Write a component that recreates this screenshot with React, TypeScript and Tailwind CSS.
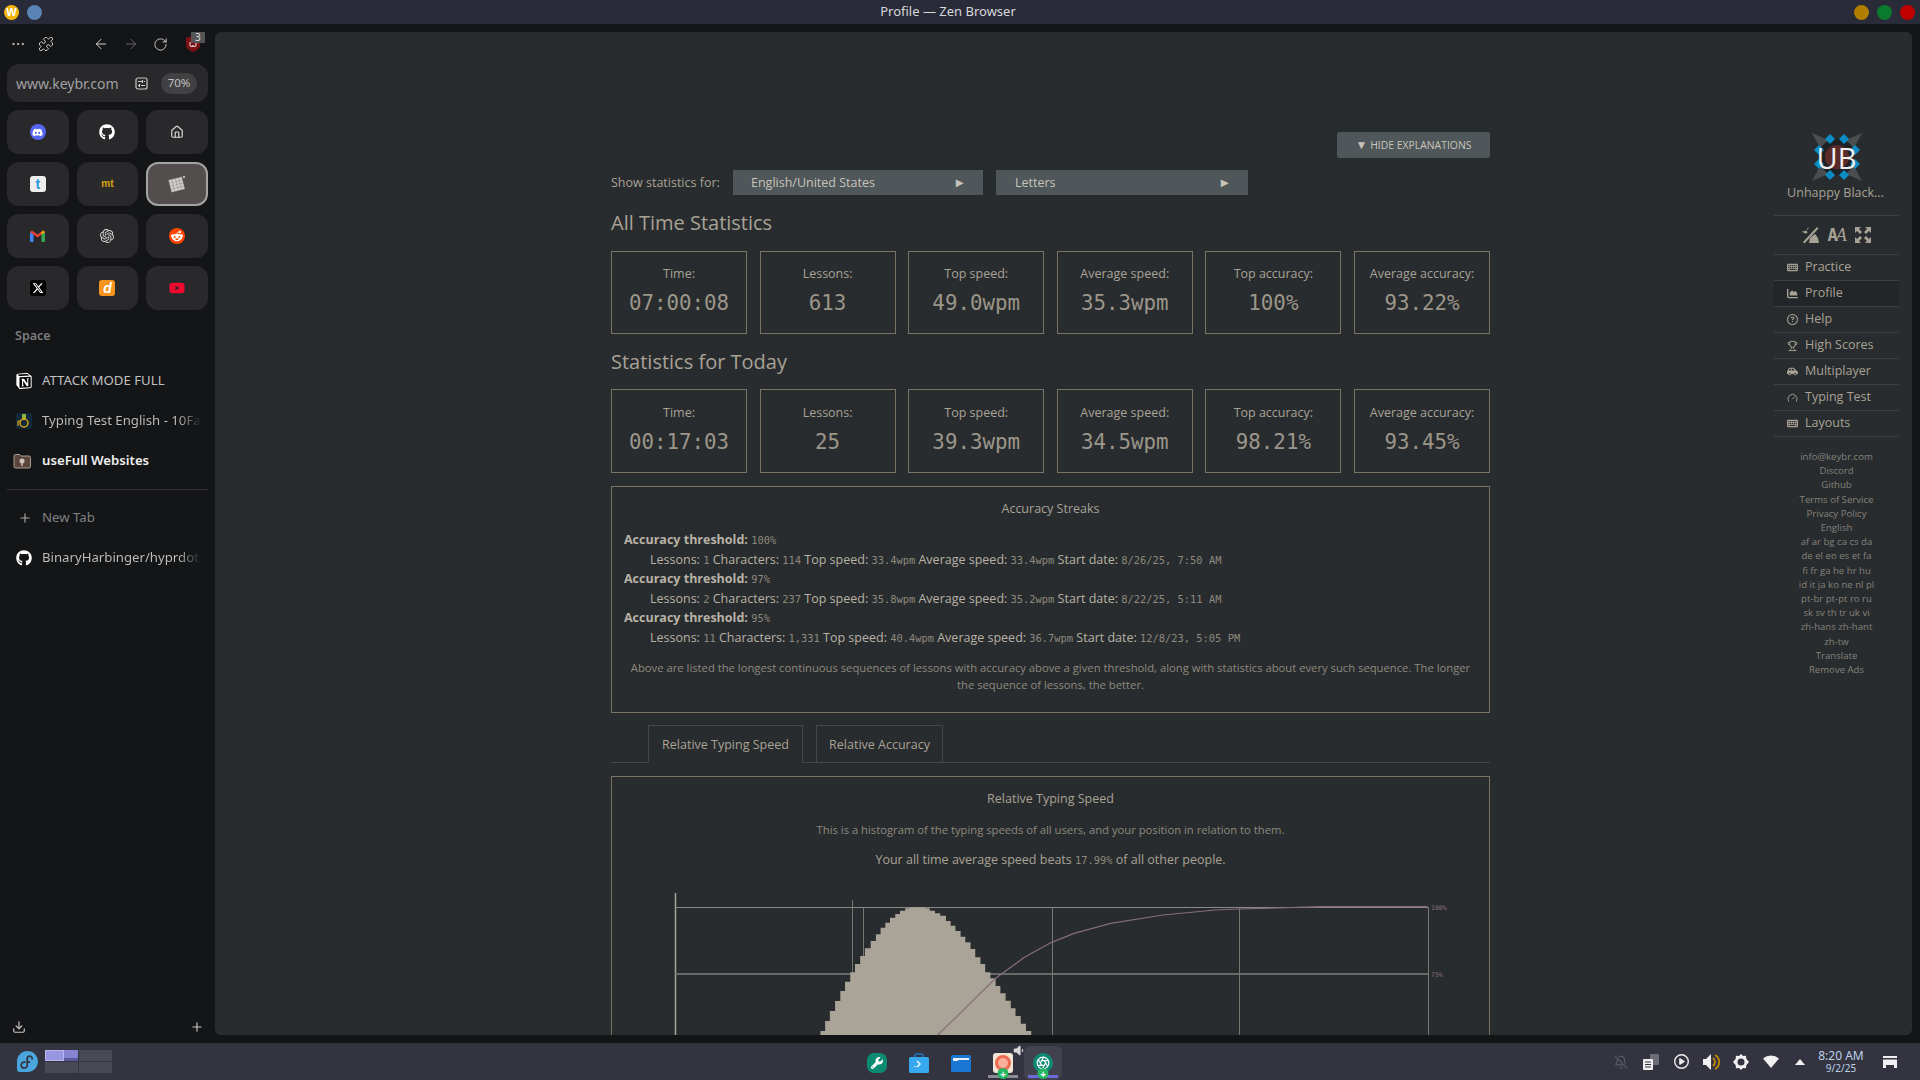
import React from 'react'
import {
  ArrowLeft,
  ArrowRight,
  Aperture,
  BellOff,
  Download,
  Ellipsis,
  Gauge,
  Home,
  Plus,
  Puzzle,
  RotateCw,
  Trophy,
} from 'lucide-react'
import {
  FaCarSide,
  FaChartArea,
  FaDiscord,
  FaGithub,
  FaRedditAlien,
  FaRegCircleQuestion,
  FaRegCirclePlay,
  FaVolumeLow,
  FaWrench,
  FaXTwitter,
  FaYoutube,
  FaKeyboard,
} from 'react-icons/fa6'
import { SiFedora, SiNotion, SiOpenai } from 'react-icons/si'

const allTime = [
  ['Time:', '07:00:08'],
  ['Lessons:', '613'],
  ['Top speed:', '49.0wpm'],
  ['Average speed:', '35.3wpm'],
  ['Top accuracy:', '100%'],
  ['Average accuracy:', '93.22%'],
]

const today = [
  ['Time:', '00:17:03'],
  ['Lessons:', '25'],
  ['Top speed:', '39.3wpm'],
  ['Average speed:', '34.5wpm'],
  ['Top accuracy:', '98.21%'],
  ['Average accuracy:', '93.45%'],
]

const streaks = [
  ['100%', '1', '114', '33.4wpm', '33.4wpm', '8/26/25, 7:50 AM'],
  ['97%', '2', '237', '35.8wpm', '35.2wpm', '8/22/25, 5:11 AM'],
  ['95%', '11', '1,331', '40.4wpm', '36.7wpm', '12/8/23, 5:05 PM'],
]

const footerLinks = [
  'info@keybr.com',
  'Discord',
  'Github',
  'Terms of Service',
  'Privacy Policy',
  'English',
  'af ar bg ca cs da',
  'de el eo es et fa',
  'fi fr ga he hr hu',
  'id it ja ko ne nl pl',
  'pt-br pt-pt ro ru',
  'sk sv th tr uk vi',
  'zh-hans zh-hant',
  'zh-tw',
  'Translate',
  'Remove Ads',
]

// histogram steps read off the reference, x/y in the zoomed crop
const histogram = [
  [345, 453], [354, 423], [363, 393], [373, 363], [383, 333], [392, 305], [402, 277], [411, 252],
  [421, 228], [430, 205], [441, 183], [451, 163], [460, 143], [469, 128], [478, 113], [488, 102],
  [497, 92], [507, 85], [516, 82], [545, 85], [554, 92], [564, 100], [574, 107], [585, 123],
  [594, 137], [603, 153], [613, 170], [622, 187], [632, 207], [641, 232], [651, 252], [660, 277],
  [670, 295], [680, 318], [689, 340], [699, 362], [709, 385], [718, 408], [728, 431], [738, 453],
]

const curve = [
  [568, 467], [625, 380], [680, 295], [735, 232], [787, 187], [830, 160], [900, 130], [1000, 105],
  [1100, 90], [1146, 87], [1218, 84], [1300, 80], [1506, 80],
]

const toX = (x: number) => 640 + x / 1.912
const toY = (y: number) => 880 + y / 3

function histogramPath() {
  let d = `M${toX(345)} 1040`
  histogram.forEach(([x, y]) => {
    d += `H${toX(x)}V${toY(y)}`
  })
  return `${d}H${toX(748)}V1040Z`
}

function StatRow({ items, tall }: { items: string[][]; tall?: boolean }) {
  return (
    <div className="flex justify-between">
      {items.map(([label, value]) => (
        <div
          key={label}
          className={
            tall
              ? 'flex h-[84px] w-[136px] flex-col items-center border border-[#7a7263] pt-[14px]'
              : 'flex h-[83px] w-[136px] flex-col items-center border border-[#7a7263] pt-[13px]'
          }
        >
          <div className="text-[12.5px] leading-[18px] text-[#a8a296]">{label}</div>
          <div className="mt-[6px] font-['DejaVu_Sans_Mono',monospace] text-[20.8px] leading-[28px] text-[#9c968a]">
            {value}
          </div>
        </div>
      ))}
    </div>
  )
}

function Mono({ children }: { children: React.ReactNode }) {
  return (
    <span className="font-['DejaVu_Sans_Mono',monospace] text-[10.4px] leading-none font-normal text-[#8e897e]">
      {children}
    </span>
  )
}

function Tile({ children, active }: { children: React.ReactNode; active?: boolean }) {
  return (
    <div
      className={
        active
          ? 'flex h-11 items-center justify-center rounded-xl border-2 border-[#a5a3a0] bg-[#514e4d]'
          : 'flex h-11 items-center justify-center rounded-xl bg-[#29292b]'
      }
    >
      {children}
    </div>
  )
}

function KeybrLogo() {
  return (
    <svg width="18" height="18" viewBox="0 0 18 18">
      <g transform="rotate(-14 9 9)">
        <rect x="1.500" y="3" width="14" height="13" fill="#8f8c89" />
        {[0, 1, 2, 3].map((row) =>
          [0, 1, 2, 3].map((col) => (
            <rect key={`${row}-${col}`} x={2 + col * 3.4} y={3.500 + row * 3.100} width="3" height="2.700" fill="#cfccc8" />
          )),
        )}
      </g>
      <circle cx="16" cy="2" r="1" fill="#dddddd" />
    </svg>
  )
}

function GmailIcon() {
  return (
    <svg width="15" height="12" viewBox="0 0 15 12">
      <path d="M0 2v9a1 1 0 0 0 1 1h2.5V4.5z" fill="#4285f4" />
      <path d="M15 2v9a1 1 0 0 1-1 1h-2.5V4.5z" fill="#34a853" />
      <path d="M0 2 7.5 7.5 15 2 13 .5 7.5 4.5 2 .5z" fill="#ea4335" />
      <path d="M11.5 2.5 13 .5 15 2l-3.500 2.500z" fill="#fbbc04" />
    </svg>
  )
}

function SideTab({
  icon,
  label,
  bold,
  fade,
}: {
  icon: React.ReactNode
  label: string
  bold?: boolean
  fade?: boolean
}) {
  return (
    <div className="flex h-10 items-center pl-4">
      <div className="flex w-[26px] shrink-0 items-center">{icon}</div>
      <div
        className={
          bold
            ? 'overflow-hidden text-[13.2px] font-semibold whitespace-nowrap text-[#f0f0f0]'
            : fade
              ? 'w-[160px] overflow-hidden bg-gradient-to-r from-[#c0c0c0] from-85% to-transparent bg-clip-text text-[13.2px] whitespace-nowrap text-transparent'
              : 'overflow-hidden text-[13.2px] whitespace-nowrap text-[#c0c0c0]'
        }
      >
        {label}
      </div>
    </div>
  )
}

function Sidebar() {
  return (
    <aside className="flex w-[215px] shrink-0 flex-col pt-2 pb-[9px] text-[#c0c0c0]">
      <div className="relative flex h-6 items-center">
        <Ellipsis size={16} strokeWidth={1.5} className="ml-[10px] text-[#d0d0d0]" />
        <Puzzle size={16} strokeWidth={1.5} className="ml-[12px] text-[#c8c8c8]" />
        <ArrowLeft size={16} strokeWidth={1.5} className="ml-[39px] text-[#d0d0d0]" />
        <ArrowRight size={16} strokeWidth={1.5} className="ml-[14px] text-[#66666a]" />
        <RotateCw size={15} strokeWidth={1.5} className="ml-[14px] text-[#d0d0d0]" />
        <svg width="14" height="16" viewBox="0 0 14 16" className="ml-[18px]">
          <path d="M7 0 14 2v7c0 3-3 5.500-7 7-4-1.500-7-4-7-7V2z" fill="#7c1216" />
          <path d="M4 6v3a1.500 1.500 0 0 0 3 0 1.500 1.500 0 0 0 3 0V6" fill="none" stroke="#e8d8d8" strokeWidth="1.100" />
        </svg>
        <span className="absolute top-0 left-[191px] bg-[#555558] px-[4px] text-[10px] leading-[11px] text-[#dddddd]">
          3
        </span>
      </div>

      <div className="mx-[7px] mt-2 flex h-[38px] items-center rounded-xl bg-[#29292b] pl-[9px]">
        <span className="w-[119px] text-[14px] text-[#a0a0a2]">www.keybr.com</span>
        <svg width="13" height="13" viewBox="0 0 13 13" fill="none" stroke="#c8c8c8" strokeWidth="1.200">
          <rect x="1" y="1" width="11" height="11" rx="2" />
          <path d="M3 4.500h4M9 4.500h1M3 8.500h1M6 8.500h4M7.500 3v3M4.500 7v3" />
        </svg>
        <span className="ml-[13px] flex h-[21px] w-[36px] items-center justify-center rounded-full bg-[#414143] text-[11.5px] text-[#c0c0c0]">
          70%
        </span>
      </div>

      <div className="mx-[7px] mt-2 grid grid-cols-3 gap-2">
        <Tile>
          <span className="flex size-4 items-center justify-center rounded-full bg-[#5865f2]">
            <FaDiscord size={11} className="text-white" />
          </span>
        </Tile>
        <Tile>
          <FaGithub size={16} className="text-white" />
        </Tile>
        <Tile>
          <Home size={14} className="text-[#d8d8d8]" />
        </Tile>
        <Tile>
          <span className="flex size-4 items-center justify-center rounded-[3px] bg-[#eeeeee] font-['Liberation_Sans',sans-serif] text-[14px] leading-none font-bold text-[#2f9ae0]">
            t
          </span>
        </Tile>
        <Tile>
          <span className="flex size-4 items-center justify-center rounded-[3px] bg-[#2b2b2b] font-['Liberation_Sans',sans-serif] text-[10px] leading-none font-bold text-[#d9a514]">
            mt
          </span>
        </Tile>
        <Tile active>
          <KeybrLogo />
        </Tile>
        <Tile>
          <GmailIcon />
        </Tile>
        <Tile>
          <SiOpenai size={14} className="text-[#d8d8d8]" />
        </Tile>
        <Tile>
          <span className="flex size-4 items-center justify-center rounded-full bg-[#ff4500]">
            <FaRedditAlien size={12} className="text-white" />
          </span>
        </Tile>
        <Tile>
          <span className="flex size-4 items-center justify-center rounded-[3px] bg-black">
            <FaXTwitter size={12} className="text-white" />
          </span>
        </Tile>
        <Tile>
          <span className="flex size-4 items-center justify-center rounded-[3px] bg-[#f7941d] font-['Liberation_Sans',sans-serif] text-[14px] leading-none font-bold text-white italic">
            d
          </span>
        </Tile>
        <Tile>
          <FaYoutube size={16} className="text-[#f00a2e]" />
        </Tile>
      </div>

      <div className="mt-[18px] pl-[15px] text-[12.5px] leading-4 font-semibold text-[#7c7c7e]">Space</div>

      <div className="mt-[17px]">
        <SideTab
          icon={<SiNotion size={16} className="rounded-[3px] bg-black text-white" />}
          label="ATTACK MODE FULL"
        />
        <SideTab
          icon={
            <svg width="16" height="16" viewBox="0 0 16 16">
              <rect width="16" height="16" rx="3" fill="#11293a" />
              <path d="M6 1h4v6H6z" fill="#8fb23a" />
              <circle cx="8" cy="10" r="4" fill="none" stroke="#d9a514" strokeWidth="1.500" />
              <path d="M2 8h3M2 8v5" stroke="#d9a514" strokeWidth="1.200" />
            </svg>
          }
          label="Typing Test English - 10Fa"
          fade
        />
        <SideTab
          icon={
            <svg width="18" height="16" viewBox="0 0 18 16" className="-ml-[3px]">
              <path d="M1 3a1.500 1.500 0 0 1 1.500-1.500h4L8 3h8a1.500 1.500 0 0 1 1.500 1.500v9A1.500 1.500 0 0 1 16 15H2.500A1.500 1.500 0 0 1 1 13.500z" fill="#5b463c" stroke="#c9b9ae" strokeWidth=".8" />
              <circle cx="9" cy="8" r="2.500" fill="#cfc4bb" />
              <rect x="8.300" y="9" width="1.400" height="4" fill="#cfc4bb" />
            </svg>
          }
          label="useFull Websites"
          bold
        />
      </div>

      <div className="mx-[7px] mt-2 h-px bg-[#333335]" />

      <div className="mt-2">
        <div className="flex h-10 items-center pl-[18px] text-[13.2px] text-[#808082]">
          <Plus size={14} className="mr-[10px] text-[#a8a8a8]" />
          New Tab
        </div>
        <SideTab
          icon={<FaGithub size={16} className="text-white" />}
          label="BinaryHarbinger/hyprdots"
          fade
        />
      </div>

      <div className="mt-auto flex items-center justify-between pr-[11px] pl-[12px]">
        <Download size={14} className="text-[#c8c8c8]" />
        <Plus size={14} className="text-[#c8c8c8]" />
      </div>
    </aside>
  )
}

function Avatar() {
  return (
    <div className="relative flex h-[50px] w-[50px] items-center justify-center">
      <svg width="50" height="50" viewBox="0 0 50 50" className="absolute inset-0">
        <path d="M0 1 16 8 8 16zM50 1 42 16 34 8zM50 49 34 42 42 34zM0 49 8 34 16 42z" fill="#4a4e51" />
        <circle cx="25" cy="25" r="18" fill="#1e2224" />
        <circle cx="25" cy="25" r="12" fill="#5a2a26" />
        {[
          [18, 7],
          [32, 7],
          [43, 18],
          [43, 32],
          [32, 43],
          [18, 43],
          [7, 32],
          [7, 18],
        ].map(([x, y]) => (
          <path key={`${x}-${y}`} d={`M${x - 5} ${y}L${x} ${y - 5}L${x + 5} ${y}L${x} ${y + 5}Z`} fill="#0a8cc4" />
        ))}
      </svg>
      <span className="relative text-[29px] leading-none text-[#eeeeee]">UB</span>
    </div>
  )
}

function NavRow({ icon, label, active }: { icon: React.ReactNode; label: string; active?: boolean }) {
  return (
    <div
      className={
        active
          ? 'flex h-[26px] items-center gap-[7px] border-b border-[#3c4042] bg-[#232628] pl-[13px] text-[12.5px] text-[#a8a296]'
          : 'flex h-[26px] items-center gap-[7px] border-b border-[#3c4042] pl-[13px] text-[12.5px] text-[#a8a296]'
      }
    >
      <span className="flex w-[11px] justify-center">{icon}</span>
      {label}
    </div>
  )
}

function RightNav() {
  return (
    <nav className="ml-[284px] w-[125px] shrink-0 pt-[100px]">
      <div className="flex flex-col items-center">
        <Avatar />
        <div className="mt-[2px] pr-[2px] text-[12.5px] leading-[18px] text-[#a8a296]">Unhappy Black...</div>
      </div>
      <div className="mt-[13px] flex h-[40px] items-center justify-center gap-[7px] border-y border-[#3c4042] text-[#a8a296]">
        <svg width="19" height="19" viewBox="0 0 19 19" fill="#a8a296">
          <path d="M2 16 16 1l1.500 1.500L3.500 17.500z" />
          <path d="M8 1a4.500 4.500 0 0 0-1.500 6A4.500 4.500 0 0 1 1 5a5.500 5.500 0 0 0 7-4z" />
          <path d="M9 12l5-4 3 4 1 5H8z" />
        </svg>
        <span className="flex items-end leading-none">
          <span className="font-['DejaVu_Sans_Mono',monospace] text-[17px] font-bold">A</span>
          <span className="-ml-[2px] font-['Liberation_Serif',serif] text-[18px] italic">A</span>
        </span>
        <svg width="18" height="18" viewBox="0 0 18 18" fill="#a8a296">
          <path d="M1 1h6L5 3l3 3-2 2-3-3-2 2zM17 1v6l-2-2-3 3-2-2 3-3-2-2zM17 17h-6l2-2-3-3 2-2 3 3 2-2zM1 17v-6l2 2 3-3 2 2-3 3 2 2z" />
        </svg>
      </div>
      <NavRow icon={<FaKeyboard size={11} />} label="Practice" />
      <NavRow icon={<FaChartArea size={11} />} label="Profile" active />
      <NavRow icon={<FaRegCircleQuestion size={11} />} label="Help" />
      <NavRow icon={<Trophy size={12} />} label="High Scores" />
      <NavRow icon={<FaCarSide size={11} />} label="Multiplayer" />
      <NavRow icon={<Gauge size={12} />} label="Typing Test" />
      <NavRow icon={<FaKeyboard size={11} />} label="Layouts" />
      <div className="mt-[13px] flex flex-col items-center text-[9.6px] leading-[14.200px] text-[#85817a]">
        {footerLinks.map((link) => (
          <div key={link}>{link}</div>
        ))}
      </div>
    </nav>
  )
}

function Chart() {
  const line = curve.map(([x, y]) => `${toX(x)},${toY(y)}`).join(' ')
  return (
    <svg width="800" height="150" viewBox="660 890 800 150" className="mt-[21px] ml-[48px] block">
      <line x1="675.500" y1="893" x2="675.500" y2="1040" stroke="#aaa59a" strokeWidth="1.500" />
      <line x1="675" y1="907.500" x2="1428" y2="907.500" stroke="#8b8b85" />
      <line x1="675" y1="974" x2="1428" y2="974" stroke="#7f7f78" strokeWidth="1.400" />
      <line x1="852.500" y1="900" x2="852.500" y2="1040" stroke="#77776f" />
      <line x1="863.500" y1="907" x2="863.500" y2="1040" stroke="#77776f" />
      <line x1="1052.500" y1="907" x2="1052.500" y2="1040" stroke="#77776f" />
      <line x1="1239.500" y1="907" x2="1239.500" y2="1040" stroke="#77776f" />
      <line x1="1428.500" y1="907" x2="1428.500" y2="1040" stroke="#77776f" />
      <path d={histogramPath()} fill="#aaa397" />
      <polyline points={line} fill="none" stroke="#866d7b" strokeWidth="1.200" />
      <text x="1431" y="910" fontSize="6.500" fill="#866d7b" fontFamily="DejaVu Sans Mono, monospace">
        100%
      </text>
      <text x="1431" y="977" fontSize="6.500" fill="#866d7b" fontFamily="DejaVu Sans Mono, monospace">
        75%
      </text>
    </svg>
  )
}

function MainColumn() {
  return (
    <main className="ml-[396px] w-[879px] shrink-0 pt-[100px] font-['Open_Sans',sans-serif]">
      <div className="flex justify-end">
        <button className="h-[26px] w-[153px] rounded-[2px] bg-[#4f575b] text-[10.400px] text-[#c8c4ba]">
          <span className="text-[12px]">▼</span> HIDE EXPLANATIONS
        </button>
      </div>

      <div className="mt-[12px] flex h-[25px] items-center text-[12.5px] text-[#a8a296]">
        <span className="w-[122px] pt-px">Show statistics for:</span>
        <div className="flex h-full w-[250px] items-center justify-between bg-[#4f575b] pt-px pr-[17px] pl-[18px] text-[#c8c4ba]">
          English/United States <span className="text-[13px]">►</span>
        </div>
        <div className="ml-[13px] flex h-full w-[252px] items-center justify-between bg-[#4f575b] pt-px pr-[17px] pl-[19px] text-[#c8c4ba]">
          Letters <span className="text-[13px]">►</span>
        </div>
      </div>

      <h2 className="mt-[14px] text-[20px] leading-[28px] text-[#a8a296]">All Time Statistics</h2>
      <div className="mt-[14px]">
        <StatRow items={allTime} />
      </div>

      <h2 className="mt-[14px] text-[20px] leading-[28px] text-[#a8a296]">Statistics for Today</h2>
      <div className="mt-[13px]">
        <StatRow items={today} tall />
      </div>

      <section className="mt-[13px] h-[227px] border border-[#7a7263] px-[12px] pt-[13px] text-[12.5px] text-[#a8a296]">
        <div className="text-center leading-[18px]">Accuracy Streaks</div>
        <div className="mt-[12px] text-[#b8b2a6]">
          {streaks.map(([threshold, lessons, chars, top, avg, date]) => (
            <div key={threshold}>
              <div className="h-[19.500px] leading-[19.500px] font-bold">
                Accuracy threshold: <Mono>{threshold}</Mono>
              </div>
              <div className="h-[19.500px] pl-[26px] leading-[19.500px]">
                Lessons: <Mono>{lessons}</Mono> Characters: <Mono>{chars}</Mono> Top speed: <Mono>{top}</Mono> Average speed:{' '}
                <Mono>{avg}</Mono> Start date: <Mono>{date}</Mono>
              </div>
            </div>
          ))}
        </div>
        <p className="mt-[12px] text-center text-[11.250px] leading-[17px] text-[#8e897e]">
          Above are listed the longest continuous sequences of lessons with accuracy above a given threshold, along with
          statistics about every such sequence. The longer the sequence of lessons, the better.
        </p>
      </section>

      <div className="mt-[13px] flex h-[37px] items-end gap-[13px] border-b border-[#41474b] pl-[37px] text-[12.5px] text-[#a8a296]">
        <div className="-mb-px flex h-[38px] w-[155px] items-center justify-center border border-b-0 border-[#41474b] bg-[#282c2e] pt-[2px]">
          Relative Typing Speed
        </div>
        <div className="flex h-[37px] w-[127px] items-center justify-center border border-b-0 border-[#41474b] pt-[2px]">
          Relative Accuracy
        </div>
      </div>

      <section className="mt-[13px] h-[400px] border border-[#7a7263] pt-[13px] text-center text-[12.5px] text-[#a8a296]">
        <div className="leading-[18px]">Relative Typing Speed</div>
        <p className="mt-[13px] text-[11.250px] leading-[18px] text-[#8e897e]">
          This is a histogram of the typing speeds of all users, and your position in relation to them.
        </p>
        <p className="mt-[12px] leading-[18px]">
          Your all time average speed beats <Mono>17.99%</Mono> of all other people.
        </p>
        <Chart />
      </section>
    </main>
  )
}

function TaskbarIcon({ children, bar, active }: { children: React.ReactNode; bar?: string; active?: boolean }) {
  return (
    <div
      className={
        active
          ? 'relative flex h-[34px] w-[38px] items-center justify-center self-end rounded-md bg-[#41424e]'
          : 'relative flex h-[34px] w-[42px] items-center justify-center self-end'
      }
    >
      {children}
      {bar && (
        <>
          <span className={bar} />
          <span className="absolute bottom-[1px] left-1/2 flex size-[11px] -translate-x-1/2 items-center justify-center rounded-full bg-[#26b561] text-[10px] leading-none font-bold text-white">
            +
          </span>
        </>
      )}
    </div>
  )
}

function Taskbar() {
  return (
    <footer className="flex h-[37px] shrink-0 items-center bg-[#33343f] font-['Noto_Sans',sans-serif]">
      <div className="flex w-[856px] items-center">
        <span className="ml-[17px] flex size-[21px] items-center justify-center rounded-full bg-[#fff0]">
          <SiFedora size={21} className="text-[#4aa6df]" />
        </span>
        <div className="ml-[7px] grid grid-cols-2 gap-px">
          <div className="relative h-[11px] w-[33px] bg-[#5c5a9e]">
            <span className="absolute inset-y-0 left-0 w-[19px] border border-[#b8b5f0] bg-[#9a97e2]" />
            <span className="absolute top-0 right-0 h-[8px] w-[14px] bg-[#8683cf]" />
          </div>
          <div className="h-[11px] w-[33px] bg-[#484954]" />
          <div className="h-[11px] w-[33px] bg-[#484954]" />
          <div className="h-[11px] w-[33px] bg-[#484954]" />
        </div>
      </div>

      <div className="flex h-full w-[210px] items-center">
        <TaskbarIcon>
          <span className="flex size-[20px] items-center justify-center rounded-[7px] bg-[#0d8a72]">
            <FaWrench size={12} className="text-white" />
          </span>
        </TaskbarIcon>
        <TaskbarIcon>
          <svg width="20" height="20" viewBox="0 0 20 20">
            <path d="M6 5V2.500A1.500 1.500 0 0 1 7.500 1h5A1.500 1.500 0 0 1 14 2.500V5" fill="none" stroke="#1f78c4" strokeWidth="1.500" />
            <rect y="4" width="20" height="16" rx="1.500" fill="#35a8ee" />
            <path d="M8 8l3 3-3 3M6 13v1" fill="none" stroke="#eaf6ff" strokeWidth="1.500" />
          </svg>
        </TaskbarIcon>
        <TaskbarIcon>
          <svg width="20" height="17" viewBox="0 0 20 17">
            <path d="M0 1.500A1.500 1.500 0 0 1 1.500 0H18.500A1.500 1.500 0 0 1 20 1.500V15.500A1.500 1.500 0 0 1 18.500 17H1.500A1.500 1.500 0 0 1 0 15.500z" fill="#1976d2" />
            <path d="M2 3h16v2H8L6 6H2z" fill="#e8f1fb" />
          </svg>
        </TaskbarIcon>
        <TaskbarIcon bar="absolute bottom-[2px] left-[6px] h-[3px] w-[30px] bg-[#8b8b90]">
          <span className="flex size-[20px] items-center justify-center rounded-[3px] bg-[#efe6d6]">
            <span className="size-[16px] rounded-full border-[3px] border-[#ee6a50] bg-[#f8b09a]" />
          </span>
          <FaVolumeLow size={11} className="absolute top-[-1px] right-0 text-[#d8d8d8]" />
        </TaskbarIcon>
        <TaskbarIcon active bar="absolute bottom-[2px] left-[4px] h-[3px] w-[30px] bg-[#6d6bd8]">
          <span className="flex size-[20px] items-center justify-center rounded-full bg-[#0d8a72]">
            <Aperture size={14} className="text-white" />
          </span>
        </TaskbarIcon>
      </div>

      <div className="ml-auto flex items-center pr-2 text-[#eeeeee]">
        <span className="flex w-[30px] justify-center">
          <BellOff size={14} className="text-[#5a5b62]" />
        </span>
        <span className="flex w-[30px] justify-center">
          <svg width="16" height="16" viewBox="0 0 16 16">
            <rect x="7" y="0" width="9" height="11" rx="1" fill="#6c6d75" />
            <rect x="0" y="5" width="10" height="11" rx="1" fill="#f0f0f0" />
            <path d="M2 8h6M2 10.500h6M2 13h6" stroke="#33343f" />
          </svg>
        </span>
        <span className="flex w-[30px] justify-center">
          <FaRegCirclePlay size={15} />
        </span>
        <span className="relative flex w-[30px] justify-center">
          <svg width="17" height="16" viewBox="0 0 17 16">
            <path d="M0 5h3l5-5v16l-5-5H0z" fill="#f0f0f0" />
            <path d="M10 4a5 5 0 0 1 0 8M12 1a8 8 0 0 1 0 14" fill="none" stroke="#c28a00" strokeWidth="1.800" />
          </svg>
        </span>
        <span className="flex w-[30px] justify-center">
          <svg width="16" height="16" viewBox="0 0 16 16">
            <path d="M8 0l2 2 3-.3.300 3L16 8l-2.700 3.300-.3 3-3-.3-2 2-2-2-3 .3-.3-3L0 8l2.700-3.300.3-3 3 .3z" fill="#f0f0f0" />
            <circle cx="8" cy="8" r="3.500" fill="#33343f" />
          </svg>
        </span>
        <span className="flex w-[30px] justify-center">
          <svg width="16" height="13" viewBox="0 0 16 13" fill="#f0f0f0">
            <path d="M0 3.500a12 12 0 0 1 16 0L8 13z" />
          </svg>
        </span>
        <span className="flex w-[28px] justify-center">
          <svg width="10" height="6" viewBox="0 0 10 6" fill="#f0f0f0">
            <path d="M5 0l5 6H0z" />
          </svg>
        </span>
        <div className="flex w-[54px] flex-col items-center text-[#bcd0e8]">
          <span className="text-[12px] leading-[13px]">8:20 AM</span>
          <span className="text-[10px] leading-[12px]">9/2/25</span>
        </div>
        <span className="flex w-[44px] justify-center">
          <svg width="14" height="12" viewBox="0 0 14 12" fill="#f0f0f0">
            <rect width="14" height="2" />
            <path d="M0 3.500h14V12h-3V9H3v3H0z" />
          </svg>
        </span>
      </div>
    </footer>
  )
}

export default function App() {
  return (
    <div className="flex h-[1080px] w-[1920px] flex-col overflow-hidden bg-[#141517] font-['Noto_Sans',sans-serif]">
      <header className="flex h-6 shrink-0 items-center bg-[#2a2b38]">
        <div className="flex w-[60px] items-center gap-2 pl-1">
          <span className="flex size-[15px] items-center justify-center rounded-full bg-[#f2b60f] font-['Liberation_Sans',sans-serif] text-[11px] leading-none font-bold text-white">
            W
          </span>
          <span className="size-[15px] rounded-full bg-[#5b83b5]" />
        </div>
        <div className="flex-1 text-center text-[13px] text-[#d8d8dc]">Profile — Zen Browser</div>
        <div className="flex w-[84px] items-center justify-end gap-[8px] pr-[5px]">
          <span className="size-[15px] rounded-full bg-[#b07f00]" />
          <span className="size-[15px] rounded-full bg-[#0a7a2e]" />
          <span className="size-[15px] rounded-full bg-[#c10000]" />
        </div>
      </header>

      <div className="flex min-h-0 flex-1">
        <Sidebar />
        <div className="my-2 mr-2 flex min-w-0 flex-1 overflow-hidden rounded-md bg-[#282c2e] font-['Open_Sans',sans-serif]">
          <MainColumn />
          <RightNav />
        </div>
      </div>

      <Taskbar />
    </div>
  )
}
